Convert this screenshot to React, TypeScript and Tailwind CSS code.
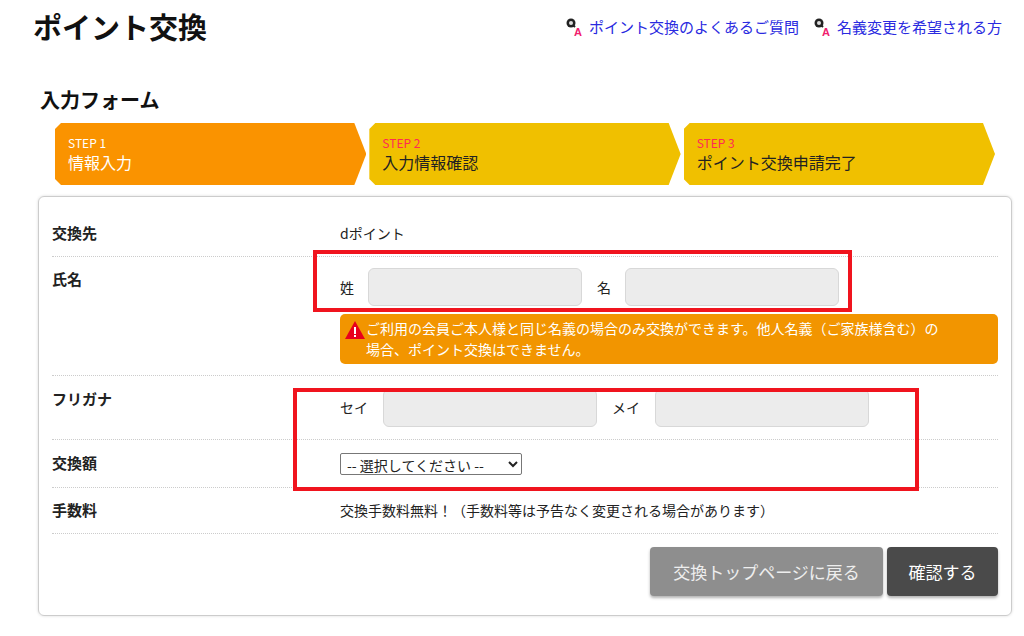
import React from "react";

const QA = () => (
  <svg width="20" height="20" viewBox="0 0 20 20" className="shrink-0">
    <circle cx="6" cy="6" r="4.5" fill="#222" />
    <circle cx="6" cy="6" r="2" fill="#ddd" />
    <path d="M8 8 L10 10" stroke="#222" strokeWidth="2" />
    <text x="9" y="19" fontSize="11" fontWeight="bold" fill="#f0206e" fontFamily="Liberation Sans">A</text>
  </svg>
);

const Step = ({ n, label, bg, first }: { n: number; label: string; bg: string; first?: boolean }) => (
  <div
    className={`flex-1 h-[62px] flex flex-col justify-center pl-[13px] ${bg} ${first ? "text-white" : "text-[#222]"}`}
    style={{ clipPath: "polygon(6px 0, calc(100% - 12px) 0, 100% 50%, calc(100% - 12px) 100%, 6px 100%, 0 calc(100% - 6px), 0 6px)" }}
  >
    <div className={`text-[12px] leading-[16px] ${first ? "text-white" : "text-[#ff2a55]"}`}>STEP {n}</div>
    <div className="text-[16px] leading-[22px]">{label}</div>
  </div>
);

const Input = ({ w = "w-[214px]" }: { w?: string }) => (
  <div className={`${w} h-[38px] rounded-[6px] bg-[#ececec] border border-[#d8d8d8]`} />
);

export default function App() {
  return (
    <div className="w-[1024px] h-[636px] bg-white overflow-hidden relative text-[#222]" style={{ fontFamily: '"Noto Sans CJK JP", "Noto Sans", sans-serif' }}>
      <div className="flex items-start justify-between pl-[33px] pr-[22px] pt-[6px]">
        <h1 className="text-[29px] font-bold leading-[40px] text-[#111]">ポイント交換</h1>
        <div className="flex gap-[14px] pt-[10px] text-[15px] text-[#2a2ae0]">
          <span className="flex items-center gap-[4px]"><QA />ポイント交換のよくあるご質問</span>
          <span className="flex items-center gap-[4px]"><QA />名義変更を希望される方</span>
        </div>
      </div>
      <h2 className="pl-[40px] mt-[40px] text-[20px] font-bold leading-[28px] text-[#111]">入力フォーム</h2>
      <div className="flex gap-[3px] ml-[55px] mr-[29px] mt-[9px]">
        <Step n={1} label="情報入力" bg="bg-[#fa9300]" first />
        <Step n={2} label="入力情報確認" bg="bg-[#f0c000]" />
        <Step n={3} label="ポイント交換申請完了" bg="bg-[#f0c000]" />
      </div>
      <div className="ml-[38px] mr-[12px] mt-[11px] h-[420px] border border-[#ccc] rounded-[6px] shadow-[0_0_3px_rgba(0,0,0,0.15)] px-[13px] pt-[14px] text-[15px]">
        <div className="flex h-[46px] items-center border-b border-dotted border-[#ccc]">
          <div className="w-[288px] font-bold">交換先</div>
          <div className="text-[14px]">dポイント</div>
        </div>
        <div className="flex border-b border-dotted border-[#ccc] pb-[11px]">
          <div className="w-[288px] font-bold pt-[11px]">氏名</div>
          <div className="flex-1">
            <div className="flex items-center h-[50px] pt-[10px] text-[14px]">
              <span className="w-[28px]">姓</span><Input />
              <span className="ml-[15px] w-[28px]">名</span><Input />
            </div>
            <div className="mt-[7px] bg-[#f29500] rounded-[5px] text-white text-[14px] leading-[21px] pl-[26px] pr-[8px] py-[4px] relative">
              <svg width="22" height="20" viewBox="0 0 22 20" className="absolute left-[4px] top-[6px]">
                <path d="M11 1 L21 19 L1 19 Z" fill="#e8001c" />
                <rect x="10" y="7" width="2" height="7" fill="#fff" />
                <rect x="10" y="15" width="2" height="2" fill="#fff" />
              </svg>
              ご利用の会員ご本人様と同じ名義の場合のみ交換ができます。他人名義（ご家族様含む）の<br />場合、ポイント交換はできません。
            </div>
          </div>
        </div>
        <div className="flex h-[64px] border-b border-dotted border-[#ccc]">
          <div className="w-[288px] font-bold pt-[12px]">フリガナ</div>
          <div className="flex items-center text-[14px]">
            <span className="w-[43px]">セイ</span><Input />
            <span className="ml-[15px] w-[43px]">メイ</span><Input />
          </div>
        </div>
        <div className="flex h-[48px] items-center border-b border-dotted border-[#ccc]">
          <div className="w-[288px] font-bold">交換額</div>
          <select className="w-[182px] h-[22px] border border-[#777] rounded-[2px] text-[14px] px-[2px] bg-white">
            <option>-- 選択してください --</option>
          </select>
        </div>
        <div className="flex h-[46px] items-center border-b border-dotted border-[#ccc]">
          <div className="w-[288px] font-bold">手数料</div>
          <div className="text-[14px]">交換手数料無料！（手数料等は予告なく変更される場合があります）</div>
        </div>
        <div className="flex justify-end gap-[4px] mt-[13px]">
          <button className="w-[233px] h-[49px] rounded-[4px] bg-[#8e8e8e] text-[#eee] text-[17px] shadow-[0_2px_3px_rgba(0,0,0,0.3)]">交換トップページに戻る</button>
          <button className="w-[111px] h-[49px] rounded-[4px] bg-[#4a4a4a] text-white text-[17px] shadow-[0_2px_3px_rgba(0,0,0,0.3)]">確認する</button>
        </div>
      </div>
      <div className="absolute left-[313px] top-[250px] w-[539px] h-[62px] border-[4px] border-[#f0141e]" />
      <div className="absolute left-[293px] top-[388px] w-[626px] h-[103px] border-[4px] border-[#f0141e]" />
    </div>
  );
}
